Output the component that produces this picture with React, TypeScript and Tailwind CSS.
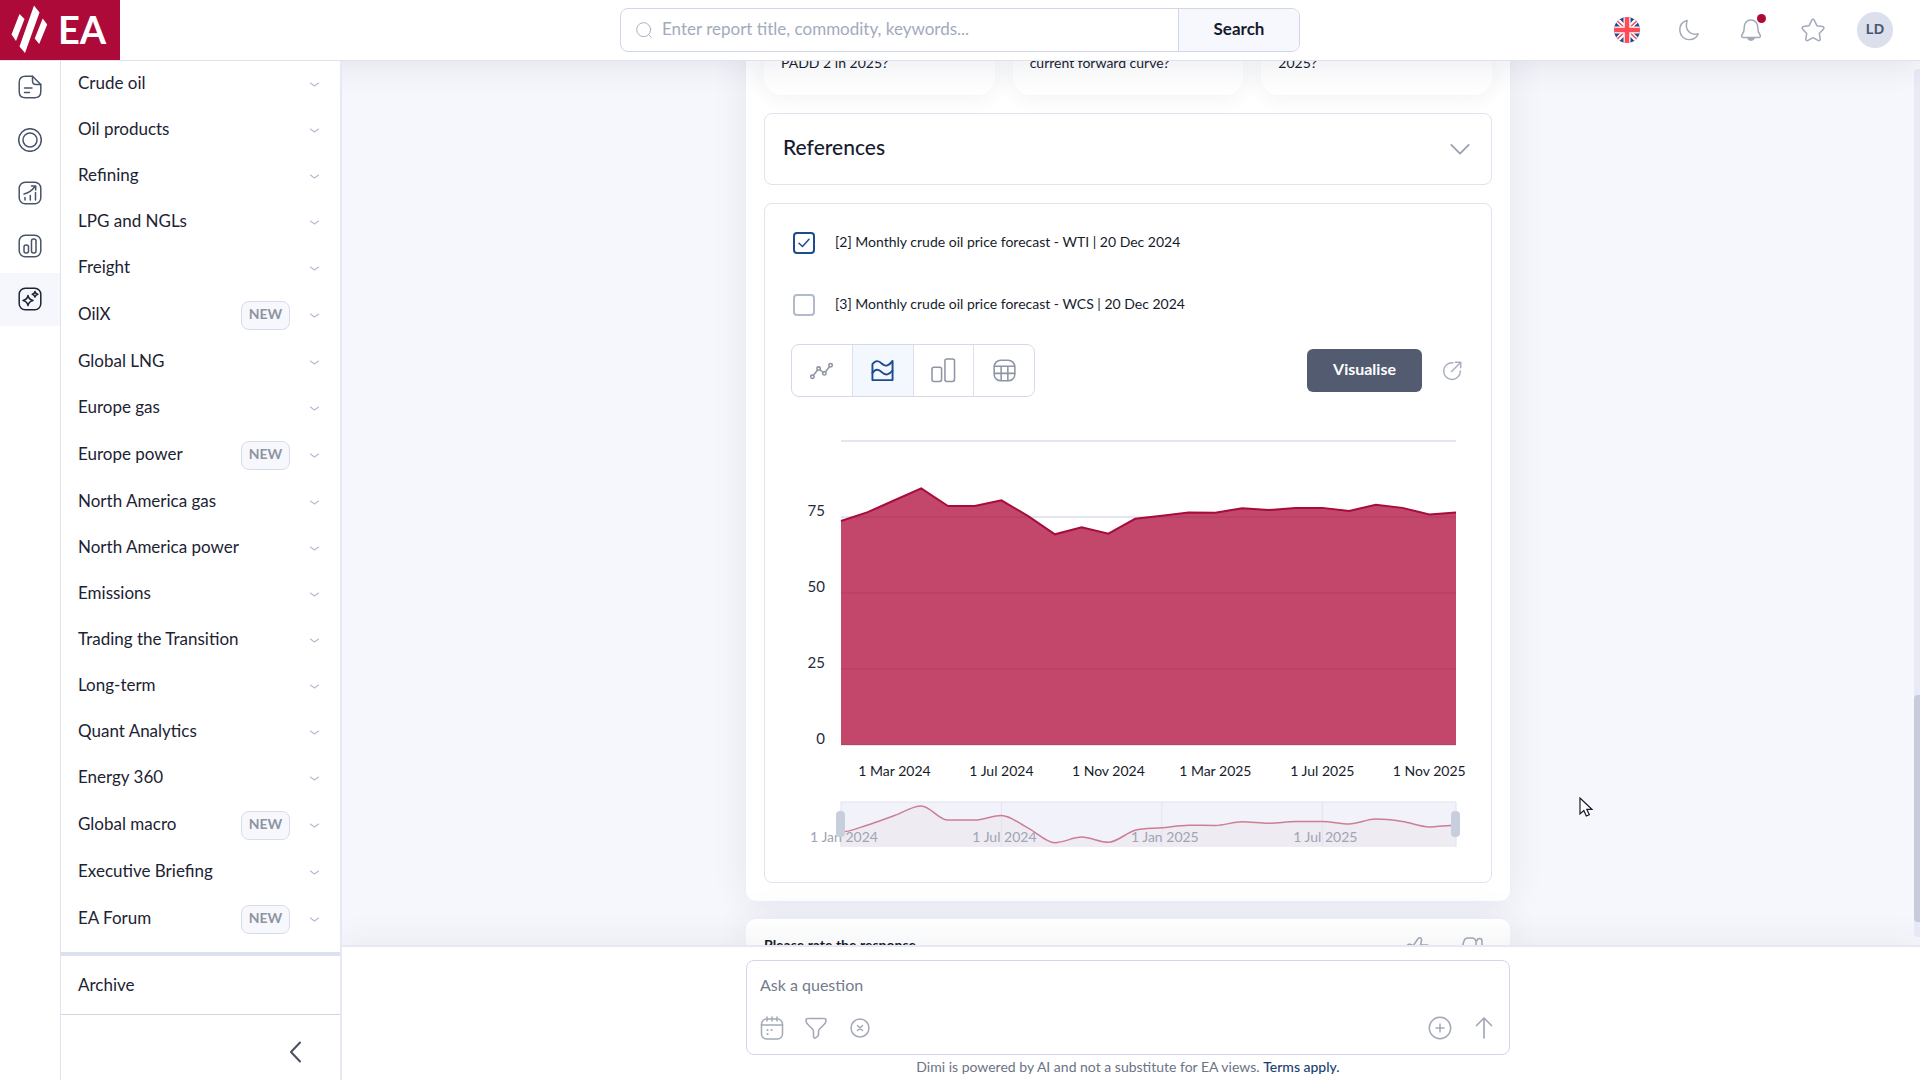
import React, { useState } from 'react';

interface NavItem {
  label: string;
  isNew?: boolean;
}

const NAV_ITEMS: NavItem[] = [
  { label: 'Crude oil' },
  { label: 'Oil products' },
  { label: 'Refining' },
  { label: 'LPG and NGLs' },
  { label: 'Freight' },
  { label: 'OilX', isNew: true },
  { label: 'Global LNG' },
  { label: 'Europe gas' },
  { label: 'Europe power', isNew: true },
  { label: 'North America gas' },
  { label: 'North America power' },
  { label: 'Emissions' },
  { label: 'Trading the Transition' },
  { label: 'Long-term' },
  { label: 'Quant Analytics' },
  { label: 'Energy 360' },
  { label: 'Global macro', isNew: true },
  { label: 'Executive Briefing' },
  { label: 'EA Forum', isNew: true }
];

// Monthly WTI price, Jan 2024 - Dec 2025
const PRICES = [
  73.7, 76.6, 80.5, 84.4, 78.6, 78.6, 80.5, 75.3, 69.3, 71.6, 69.5, 74.4,
  75.4, 76.5, 76.4, 77.9, 77.3, 78, 78, 77, 79, 78, 75.8, 76.5
];

const PLOT = { left: 50, right: 665, top: 5, bottom: 309 };
const NAV = { top: 366, bottom: 411 };

const xAt = (i: number) => PLOT.left + (i * (PLOT.right - PLOT.left)) / (PRICES.length - 1);
const yAt = (v: number) => PLOT.bottom - (v * (PLOT.bottom - PLOT.top)) / 100;
const navY = (v: number) => NAV.top + 4 + (84.4 - v) * 2.43;

interface IconProps {
  className?: string;
  width?: number;
  children: React.ReactNode;
}

const Icon: React.FC<IconProps> = ({ className = 'w-6 h-6', width = 1.5, children }) => (
  <svg
    viewBox="0 0 24 24"
    fill="none"
    stroke="currentColor"
    strokeWidth={width}
    strokeLinecap="round"
    strokeLinejoin="round"
    className={className}
    aria-hidden="true"
  >
    {children}
  </svg>
);

const RAIL_ITEMS = [
  {
    label: 'Reports',
    icon: (
      <>
        <path d="M14.5 1.2H7.5C3.4 1.2 1.2 3.4 1.2 7.5v9c0 4.1 2.2 6.3 6.3 6.3h9c4.1 0 6.3-2.2 6.3-6.3V9.5z" />
        <path d="M14.5 1.2V6c0 2.5 1 3.5 3.5 3.5h4.8M6.5 13h7.5M6.5 17.5h5" />
      </>
    )
  },
  {
    label: 'Topics',
    icon: (
      <>
        <circle cx="12" cy="12" r="11.3" />
        <circle cx="12" cy="12" r="7" />
      </>
    )
  },
  {
    label: 'Forecasts',
    icon: (
      <>
        <rect x="1.2" y="1.2" width="21.6" height="21.6" rx="6" />
        <path d="M7 19v-2.5M12.3 19v-4.5M17.5 19v-7.5M6 13c4-.8 8-3.5 11-7.5M13.5 5h4.2v4" />
      </>
    )
  },
  {
    label: 'Data',
    icon: (
      <>
        <rect x="1.2" y="1.2" width="21.6" height="21.6" rx="6" />
        <rect x="6" y="11" width="4.5" height="8" rx="2" />
        <rect x="13.5" y="5" width="4.5" height="14" rx="2" />
      </>
    )
  },
  {
    label: 'Assistant',
    icon: (
      <>
        <rect x="1.2" y="1.2" width="21.6" height="21.6" rx="6" />
        <path d="M10 8.5c.7 3.2 1.8 4.3 5 5-3.2.7-4.3 1.8-5 5-.7-3.2-1.8-4.3-5-5 3.2-.7 4.3-1.8 5-5z" />
        <path d="M17 4.5c.4 1.8 1 2.4 2.8 2.8-1.8.4-2.4 1-2.8 2.8-.4-1.8-1-2.4-2.8-2.8 1.8-.4 2.4-1 2.8-2.8z" />
      </>
    )
  }
];

const CHART_TYPES = [
  {
    label: 'Line chart',
    icon: (
      <>
        <circle cx="2.5" cy="18.5" r="1.8" />
        <circle cx="9" cy="10" r="1.8" />
        <circle cx="15" cy="15" r="1.8" />
        <circle cx="21.5" cy="6.5" r="1.8" />
        <path d="M3.6 17l4.3-5.5M10.4 11.2l3.2 2.6M16 13.5l4.4-5.6" />
      </>
    )
  },
  {
    label: 'Area chart',
    icon: (
      <>
        <path d="M1.5 22V5.5C4.5 1 8 1.5 11.5 5s7.5 2 11-3v20z" />
        <path d="M1.5 14.5c3-4.5 6.5-4 10-.5s7.5 2.5 11-2" />
      </>
    )
  },
  {
    label: 'Bar chart',
    icon: (
      <>
        <rect x="0" y="8.5" width="10" height="15" rx="2" />
        <rect x="13.5" y="0" width="10" height="23.5" rx="2" />
      </>
    )
  },
  {
    label: 'Table',
    icon: (
      <>
        <rect x="1.2" y="1.2" width="21.6" height="21.6" rx="7" />
        <path d="M1.5 7.5h21M1.5 15h21M8.500 7.500v15M15.500 7.500v15" />
      </>
    )
  }
];

const Logo = () => (
  <a href="#" aria-label="EA home" className="flex h-[60px] w-[120px] items-center bg-[#ad0a3a]">
    <svg viewBox="0 0 50 60" className="h-[60px] w-[50px]" fill="#fff" aria-hidden="true">
      <path d="M19.5 14l5 5-8.5 22-4.5-6.5z" />
      <path d="M34 5.5l5.5 7L25 53l-5.500-6.500z" />
      <path d="M42.700 18.500l4.500 6-8 19.500-4.500-5.500z" />
    </svg>
    <span className="ml-2 pb-0.5 text-[38px] leading-[58px] font-bold text-white">EA</span>
  </a>
);

const Flag = () => (
  <svg viewBox="0 0 26 26" className="h-[26px] w-[26px]" aria-hidden="true">
    <clipPath id="flag-round">
      <circle cx="13" cy="13" r="13" />
    </clipPath>
    <g clipPath="url(#flag-round)">
      <path fill="#24478f" d="M0 0h26v26H0z" />
      <path stroke="#fff" strokeWidth="5" d="M0 0l26 26M26 0L0 26" />
      <path stroke="#ff4b55" strokeWidth="1.5" d="M0 1l26 24M26 1L0 25" />
      <path stroke="#fff" strokeWidth="7" d="M13 0v26M0 13h26" />
      <path stroke="#ff4b55" strokeWidth="4.5" d="M13 0v26M0 13h26" />
    </g>
  </svg>
);

const Header = () => (
  <header className="relative z-20 grid h-[61px] shrink-0 grid-cols-[1fr_680px_1fr] items-center border-b border-[#e0e2ee] bg-white shadow-[0_6px_30px_rgba(40,50,90,0.09)]">
    <div className="self-start">
      <Logo />
    </div>
    <form
      className="flex h-11 overflow-hidden rounded-lg border border-[#d3d6e8]"
      onSubmit={(e) => e.preventDefault()}
    >
      <label className="flex flex-1 items-center gap-2.5 pl-[15px]">
        <Icon className="h-4 w-4 text-[#a9b0c2]">
          <circle cx="11.5" cy="11.5" r="10.5" />
          <path d="M19.5 19.5L23 23" />
        </Icon>
        <input
          type="text"
          aria-label="Search reports"
          placeholder="Enter report title, commodity, keywords..."
          className="flex-1 bg-transparent pb-0.5 text-[17px] text-[#161c2d] outline-none placeholder:text-[#a2abbd]"
        />
      </label>
      <button
        type="submit"
        className="w-[121px] border-l border-[#d3d6e8] bg-[#f7f8fd] pb-0.5 text-[17px] font-bold text-[#161c2d]"
      >
        Search
      </button>
    </form>
    <div className="flex items-center justify-end gap-[26px] pr-[27px] text-[#a3a9b8]">
      <button aria-label="Language" className="flex w-9 justify-center">
        <Flag />
      </button>
      <button aria-label="Dark mode" className="flex w-9 justify-center">
        <Icon className="h-[22px] w-[22px]" width={1.6}>
          <path d="M10 1.5C4.5 3 1.5 7.5 2 13c.5 5.5 5 9.7 10.5 9.5 4.5-.1 8-2.5 9.5-6.5-7.5 2.5-15.5-3-12-14.500z" />
        </Icon>
      </button>
      <button aria-label="Notifications" className="relative flex w-9 justify-center">
        <Icon className="h-6 w-6">
          <path d="M12 2C8 2 5.3 5 5.3 9c0 4-.5 5.5-2 7.3-1.3 1.5-.8 3.2 1.2 3.2h15c2 0 2.5-1.7 1.2-3.2-1.5-1.8-2-3.3-2-7.3 0-4-2.7-7-6.7-7z" />
          <path d="M9 20.5c.8 2.2 5.2 2.2 6 0z" fill="currentColor" />
        </Icon>
        <span className="absolute -top-1 right-[3px] h-[9px] w-[9px] rounded-full bg-[#ad0a3a]" />
      </button>
      <button aria-label="Favourites" className="flex w-9 justify-center">
        <Icon className="h-6 w-6">
          <path d="M13.3 2.3l2.6 5.4 5.5.9c1.6.3 2 1.5.9 2.7l-4 4.2.9 5.4c.2 1.5-.9 2.2-2.2 1.5L12 19.7l-5 2.7c-1.3.7-2.4 0-2.2-1.5l.9-5.4-4-4.2c-1.1-1.2-.7-2.4.9-2.7l5.5-.9 2.6-5.4c.6-1.3 2-1.3 2.6 0z" />
        </Icon>
      </button>
      <button className="h-9 w-9 rounded-full bg-[#dbe0ec] pb-1 font-['Noto_Sans',sans-serif] text-[15px] font-semibold text-[#4a566e]">
        LD
      </button>
    </div>
  </header>
);

const Sidebar = () => (
  <div className="relative z-30 flex shrink-0 bg-white">
    <nav aria-label="Sections" className="w-[61px] border-r border-[#e0e2ee] text-[#4a5468]">
      {RAIL_ITEMS.map((item, i) => (
        <button
          key={item.label}
          aria-label={item.label}
          className={`flex h-[53px] w-full items-center justify-center pb-0.5 ${i === 4 ? 'bg-[#f5f7fc] text-[#1d2433]' : ''}`}
        >
          <Icon className="h-6 w-6">{item.icon}</Icon>
        </button>
      ))}
    </nav>
    <div className="flex w-[281px] flex-col border-r-2 border-[#e6e8f6]">
      <ul className="min-h-0 flex-1 overflow-hidden">
        {NAV_ITEMS.map((item) => (
          <li key={item.label}>
            <button
              className={`flex w-full items-center pr-[21px] pl-[17px] text-[17px] text-[#1c2333] ${item.isNew ? 'h-12' : 'h-[46px]'}`}
            >
              <span className="flex-1 pb-[3px] text-left">{item.label}</span>
              {item.isNew && (
                <span className="mr-5 flex h-[29px] w-[49px] items-center justify-center rounded-lg border border-[#d8dbea] bg-[#f7f8fd] pb-0.5 text-sm font-bold text-[#8d94a2]">
                  NEW
                </span>
              )}
              <Icon className="h-[9px] w-[9px] overflow-visible text-[#b4bbd0]" width={3}>
                <path d="M1 8l11 8 11-8" />
              </Icon>
            </button>
          </li>
        ))}
      </ul>
      <div className="border-t-4 border-[#dde0ef]">
        <a href="#" className="flex h-[59px] items-center border-b border-[#cfd8e3] pl-[17px] text-[17px] text-[#1c2333]">
          Archive
        </a>
        <div className="flex h-[65px] items-center justify-end pt-2 pr-8">
          <button aria-label="Collapse menu" className="text-[#4a5060]">
            <Icon className="h-6 w-6" width={2}>
              <path d="M16 2.5L7 12l9 9.5" />
            </Icon>
          </button>
        </div>
      </div>
    </div>
  </div>
);

// Smooth line through the monthly points, flat at peaks and troughs
const smoothPath = () => {
  let d = `M${xAt(0)} ${navY(PRICES[0])}`;
  for (let i = 1; i < PRICES.length; i++) {
    const p0 = PRICES[Math.max(i - 2, 0)];
    const p1 = PRICES[i - 1];
    const p2 = PRICES[i];
    const p3 = PRICES[Math.min(i + 1, PRICES.length - 1)];
    const x1 = xAt(i - 1) + 9;
    const x2 = xAt(i) - 9;
    const s1 = (p1 - p0) * (p2 - p1) > 0 ? (p2 - p0) / 6 : 0;
    const s2 = (p2 - p1) * (p3 - p2) > 0 ? (p3 - p1) / 6 : 0;
    d += `C${x1} ${navY(p1 + s1)} ${x2} ${navY(p2 - s2)} ${xAt(i)} ${navY(p2)}`;
  }
  return d;
};

const PriceChart = () => {
  const line = PRICES.map((v, i) => `${xAt(i)},${yAt(v)}`).join(' ');
  const navLine = smoothPath();
  const ticks = [
    { i: 2, label: '1 Mar 2024' },
    { i: 6, label: '1 Jul 2024' },
    { i: 10, label: '1 Nov 2024' },
    { i: 14, label: '1 Mar 2025' },
    { i: 18, label: '1 Jul 2025' },
    { i: 22, label: '1 Nov 2025' }
  ];
  const navTicks = [
    { i: 0, label: '1 Jan 2024' },
    { i: 6, label: '1 Jul 2024' },
    { i: 12, label: '1 Jan 2025' },
    { i: 18, label: '1 Jul 2025' }
  ];

  return (
    <svg viewBox="0 0 674 420" className="mt-[39px] block w-full overflow-visible" role="img" aria-label="WTI price">
      {[0, 25, 50, 75, 100].map((v) => (
        <path key={v} d={`M${PLOT.left} ${yAt(v)}H${PLOT.right}`} stroke="#e3e5f2" strokeWidth="2" />
      ))}
      <polygon
        points={`${PLOT.left},${PLOT.bottom} ${line} ${PLOT.right},${PLOT.bottom}`}
        fill="#ad0a3a"
        fillOpacity="0.75"
      />
      <polyline points={line} fill="none" stroke="#a60d3c" strokeWidth="2" />
      {[0, 25, 50, 75].map((v) => (
        <text key={v} x="34" y={yAt(v) - 1} textAnchor="end" fontSize="15" fill="#1f2a3d">
          {v}
        </text>
      ))}
      {ticks.map((t) => (
        <text key={t.label} x={xAt(t.i)} y="340" textAnchor="middle" fontSize="14" fill="#161c2d">
          {t.label}
        </text>
      ))}

      {/* Range navigator */}
      <rect x={PLOT.left} y={NAV.top} width={PLOT.right - PLOT.left} height={NAV.bottom - NAV.top} fill="#f1f2fa" />
      <path d={`${navLine}V${NAV.bottom}H${PLOT.left}z`} fill="#efebf2" />
      {navTicks.slice(1).map((t) => (
        <path key={t.label} d={`M${xAt(t.i)} ${NAV.top}V${NAV.bottom}`} stroke="#e2e4ee" />
      ))}
      <path d={`M${PLOT.left} ${NAV.bottom}V${NAV.top}H${PLOT.right}V${NAV.bottom}`} fill="none" stroke="#dfe2ee" />
      <path d={navLine} fill="none" stroke="#cb7f95" strokeWidth="1.5" />
      {navTicks.map((t) => (
        <text key={t.label} x={xAt(t.i) + 3} y="406" textAnchor="middle" fontSize="14" fill="#9ea4b2">
          {t.label}
        </text>
      ))}
      <rect x={PLOT.left - 5} y="375" width="9" height="26" rx="4" fill="#c8cfdc" />
      <rect x={PLOT.right - 5} y="375" width="9" height="26" rx="4" fill="#c8cfdc" />
    </svg>
  );
};

interface SourceRowProps {
  label: string;
  checked: boolean;
  onChange: () => void;
}

const SourceRow: React.FC<SourceRowProps> = ({ label, checked, onChange }) => (
  <label className="flex h-[22px] items-center gap-5 pl-0.5 text-sm text-[#161c2d]">
    <span className="grid h-[22px] w-[22px]">
      <input
        type="checkbox"
        checked={checked}
        onChange={onChange}
        className="col-start-1 row-start-1 h-[22px] w-[22px] appearance-none rounded-sm border-2 border-[#b3bacb] bg-white checked:border-[#1d4b8f]"
      />
      {checked && (
        <Icon className="pointer-events-none col-start-1 row-start-1 m-auto h-3 w-3 text-[#1d4b8f]" width={3}>
          <path d="M2 12.5l7 6.5L22 4.5" />
        </Icon>
      )}
    </span>
    <span className="pb-[3px]">{label}</span>
  </label>
);

const ChartPanel = () => {
  const [selected, setSelected] = useState([true, false]);
  const [chartType, setChartType] = useState(1);

  const toggle = (index: number) => {
    setSelected(selected.map((s, i) => (i === index ? !s : s)));
  };

  return (
    <section className="rounded-lg border border-[#e0e3f0] px-[26px] pt-7 pb-[26px]">
      <div className="space-y-10">
        <SourceRow
          label="[2] Monthly crude oil price forecast - WTI | 20 Dec 2024"
          checked={selected[0]}
          onChange={() => toggle(0)}
        />
        <SourceRow
          label="[3] Monthly crude oil price forecast - WCS | 20 Dec 2024"
          checked={selected[1]}
          onChange={() => toggle(1)}
        />
      </div>

      <div className="mt-7 flex items-center justify-between">
        <div className="flex h-[53px] w-[244px] divide-x divide-[#dcdff0] overflow-hidden rounded-lg border border-[#d6d9ea]">
          {CHART_TYPES.map((type, i) => (
            <button
              key={type.label}
              aria-label={type.label}
              onClick={() => setChartType(i)}
              className={`flex flex-1 items-center justify-center ${chartType === i ? 'bg-[#f3f7fe] text-[#1d4b8f]' : 'text-[#8d94a3]'}`}
            >
              <Icon className="h-[23px] w-[23px] overflow-visible" width={i === 1 ? 2 : 1.6}>
                {type.icon}
              </Icon>
            </button>
          ))}
        </div>
        <div className="flex items-center gap-5 pr-[3px]">
          <button className="h-[43px] w-[115px] rounded-md bg-[#525b6f] pb-1 text-base font-bold text-white">
            Visualise
          </button>
          <button aria-label="Open in new tab" className="text-[#a9afbd]">
            <Icon className="h-5 w-5" width={1.8}>
              <path d="M13 2.2A10 10 0 1 0 22 12M11.5 12.5L22 2M16 1.5h6.500V8" />
            </Icon>
          </button>
        </div>
      </div>

      <PriceChart />
    </section>
  );
};

const Conversation = () => (
  <div className="flex min-h-0 flex-1 bg-[#f6f7fc]">
    <div className="flex flex-1 flex-col items-center justify-end overflow-hidden">
      <div className="w-full max-w-[764px] shrink-0 rounded-b-[10px] bg-white p-[18px] shadow-[0_0_36px_rgba(40,50,90,0.09)]">
        <div className="grid grid-cols-3 gap-[18px] text-sm text-[#161c2d]">
          {['PADD 2 in 2025?', 'current forward curve?', '2025?'].map((q) => (
            <button
              key={q}
              className="rounded-b-[18px] bg-white px-[17px] pb-[22px] text-left leading-5 shadow-[0_4px_20px_rgba(40,50,90,0.06)]"
            >
              {q}
            </button>
          ))}
        </div>
        <button className="my-[18px] flex h-[72px] w-full items-center justify-between rounded-lg border border-[#e0e3f0] pr-5 pl-[18px]">
          <span className="pb-1 text-[21px] font-medium text-[#161c2d]">References</span>
          <Icon className="h-[22px] w-[22px] text-[#9ba1af]" width={2}>
            <path d="M2.5 7.5L12 17l9.500-9.500" />
          </Icon>
        </button>
        <ChartPanel />
      </div>

      <div className="mt-[18px] flex h-[26px] w-full max-w-[764px] shrink-0 justify-between overflow-hidden rounded-t-[10px] bg-white px-[18px] pt-4 shadow-[0_0_36px_rgba(40,50,90,0.09)]">
        <span className="text-sm leading-5 font-bold whitespace-nowrap text-[#161c2d]">Please rate the response</span>
        <div className="flex gap-[30px] pt-0.5 pr-2 text-[#a3a9b8]">
          <button aria-label="Good response" className="h-6">
            <Icon className="h-6 w-6">
              <path d="M1 10c0-3 4-4 6-1l4.5-6.5C13-.5 16 .5 15.5 3.500L14.500 8H21c2 0 2.500 2 2 4l-2 8H8l-5-2z" />
            </Icon>
          </button>
          <button aria-label="Bad response" className="h-6">
            <Icon className="h-6 w-6 overflow-visible">
              <path d="M1 14L4 4c.5-2 2-3 4-3h4c2 0 3.500 1.500 4 3v10l-5 8c-2 1-3-1-2-4l1-3H3z" />
              <path d="M17 4c0-3.500 5-3.500 5 0v8c0 3.500-5 3.500-5 0" />
            </Icon>
          </button>
        </div>
      </div>
    </div>
    {/* Scroll position */}
    <div className="mt-2 mb-2 flex w-1.5 shrink-0 flex-col justify-end rounded-l bg-[#e8eaf6] pb-[15px]">
      <div className="h-[227px] rounded-l bg-[#c8ccda]" />
    </div>
  </div>
);

const Composer = () => (
  <div className="relative flex h-[135px] shrink-0 flex-col items-center border-t-2 border-[#e6e8f2] bg-white pt-[13px] pr-1.5 shadow-[0_-6px_30px_rgba(40,50,90,0.06)]">
    <form
      className="flex h-[95px] w-full max-w-[764px] flex-col justify-between rounded-lg border border-[#d3d6e8] px-[13px] pt-3 pb-3.5"
      onSubmit={(e) => e.preventDefault()}
    >
      <input
        type="text"
        aria-label="Ask a question"
        placeholder="Ask a question"
        className="h-6 text-base text-[#161c2d] outline-none placeholder:text-[#737b8c]"
      />
      <div className="flex items-center justify-between text-[#a3a9b8]">
        <div className="flex items-center gap-5">
          <button type="button" aria-label="Pick dates">
            <Icon>
              <rect x="1.5" y="3" width="21" height="20" rx="5" />
              <path d="M1.5 9h21M7 1v4M12 1v4M17 1v4" />
              <path d="M7.5 14h.1M11.5 14h.1M7.5 18h.1" strokeWidth="2" />
            </Icon>
          </button>
          <button type="button" aria-label="Filter">
            <Icon className="h-6 w-6" width={1.6}>
              <path d="M4 2.5h16c1.5 0 2 1 2 2 0 1.5-.5 2.5-1.5 3.5l-5 5c-.7.7-1 1.5-1 2.5v3c0 1-.5 1.7-1.2 2.2l-1.5 1c-1.3.7-2.3 0-2.3-1.2v-5c0-1-.3-1.8-1-2.5l-5-5C2.5 7 2 6 2 4.500c0-1 .5-2 2-2z" />
            </Icon>
          </button>
          <button type="button" aria-label="Clear">
            <Icon>
              <circle cx="12" cy="12" r="9" />
              <path d="M9.5 9.5l5 5M14.5 9.5l-5 5" />
            </Icon>
          </button>
        </div>
        <div className="flex items-center gap-5">
          <button type="button" aria-label="Add">
            <Icon>
              <circle cx="12" cy="12" r="10.7" />
              <path d="M12 8v8M8 12h8" />
            </Icon>
          </button>
          <button type="submit" aria-label="Send">
            <Icon width={1.7}>
              <path d="M12 22V2M4.5 9.5L12 2l7.5 7.5" />
            </Icon>
          </button>
        </div>
      </div>
    </form>
    <p className="text-sm leading-6 text-[#6b7385]">
      Dimi is powered by AI and not a substitute for EA views.{' '}
      <a href="#" className="font-medium text-[#1c3f73]">
        Terms apply.
      </a>
    </p>
  </div>
);

const App = () => (
  <div className="flex h-screen flex-col overflow-hidden bg-white font-['Lato','Open_Sans',sans-serif]">
    <Header />
    <div className="flex min-h-0 flex-1">
      <Sidebar />
      <main className="flex min-w-0 flex-1 flex-col">
        <Conversation />
        <Composer />
      </main>
    </div>
    {/* Pointer */}
    <svg viewBox="0 0 14 20" className="absolute top-[797px] left-[1579px] z-40 h-5 w-3.5" aria-hidden="true">
      <path d="M1 1v16l3.8-3.5 2.5 5.5 3-1.3-2.5-5.4h5z" fill="#fff" stroke="#161c2d" strokeWidth="1.2" />
    </svg>
  </div>
);

export default App;
